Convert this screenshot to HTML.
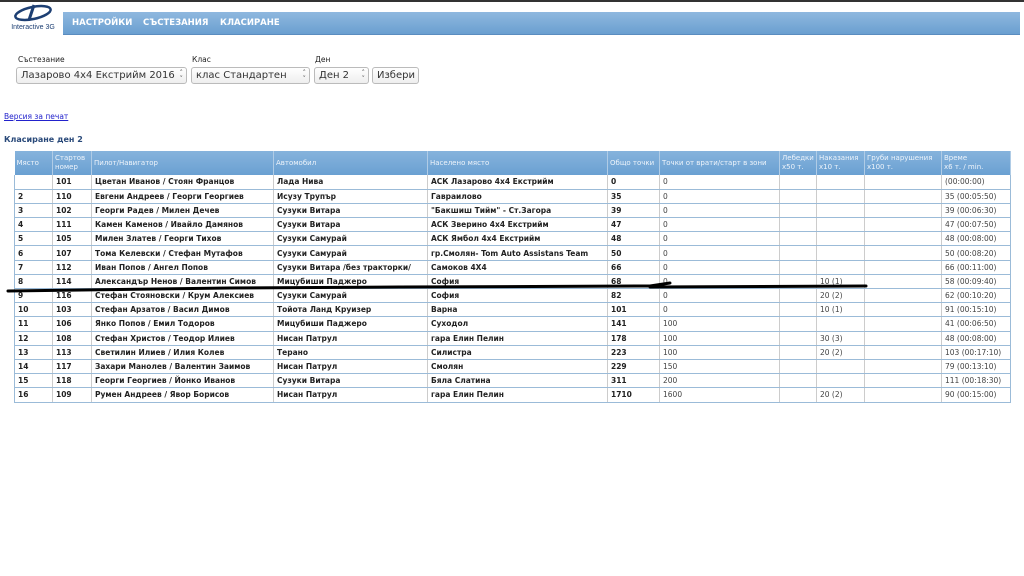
<!DOCTYPE html>
<html><head><meta charset="utf-8"><style>
*{margin:0;padding:0;box-sizing:border-box}
body{width:1024px;height:576px;background:#fff;font-family:"DejaVu Sans","Liberation Sans",sans-serif;position:relative;overflow:hidden;color:#222}
.top{position:absolute;left:0;top:0;width:1024px;height:2px;background:#333}
.nav{position:absolute;left:63px;top:12px;width:957px;height:23px;background:linear-gradient(#8fb8df,#6a9fd0);border-bottom:1px solid #5a8cbf}
.nav span{position:absolute;top:6px;color:#fff;font-weight:bold;font-size:8.5px}
.lbl{position:absolute;top:55px;font-size:7.5px;color:#222}
.sel{position:absolute;top:67px;height:17px;border:1px solid #bbb;border-radius:3px;background:linear-gradient(#fff,#eee);font-size:10px;padding:2px 4px;color:#333;white-space:nowrap}
.sel i{position:absolute;right:3px;top:2px;font-style:normal;font-size:7px;color:#666;line-height:6px}
a{position:absolute;left:4px;top:112px;font-size:7.5px;color:#22c;text-decoration:underline}
h3{position:absolute;left:4px;top:135px;font-size:8px;color:#2a4a7a;font-weight:bold}
table{position:absolute;left:14px;top:151px;width:996px;border-collapse:collapse;table-layout:fixed}
th{background:linear-gradient(#86b3dc,#6aa0d2);color:#eef4fb;font-weight:normal;font-size:7px;text-align:left;padding:1px 2px;height:24px;border-right:1px solid #b0cce6;vertical-align:middle;line-height:9px;white-space:nowrap;overflow:hidden}
td{font-size:7.5px;font-weight:bold;height:14.2px;padding:0 3px;border-right:1px solid #ccc;border-bottom:1px solid #9bbbd8;white-space:nowrap;overflow:hidden;line-height:13px}
td.n{font-weight:normal;color:#444}
td:first-child{border-left:1px solid #9bbbd8}
td:last-child{border-right:1px solid #9bbbd8}
</style></head><body>
<div class="top"></div>
<svg style="position:absolute;left:4px;top:3px" width="58" height="30" viewBox="0 0 58 30">
<ellipse cx="29" cy="10" rx="18" ry="6" fill="none" stroke="#1d3f73" stroke-width="2.5" transform="rotate(-12 29 10)"/>
<path d="M30 2 L25 17" stroke="#1d3f73" stroke-width="3"/>
<text x="29" y="26" font-size="7" text-anchor="middle" fill="#1d3f73" font-family="Liberation Sans">Interactive 3G</text>
</svg>
<div class="nav"><span style="left:9px">НАСТРОЙКИ</span><span style="left:80px">СЪСТЕЗАНИЯ</span><span style="left:157px">КЛАСИРАНЕ</span></div>
<div class="lbl" style="left:18px">Състезание</div>
<div class="lbl" style="left:192px">Клас</div>
<div class="lbl" style="left:315px">Ден</div>
<div class="sel" style="left:16px;width:171px">Лазарово 4x4 Екстрийм 2016<i>˄<br>˅</i></div>
<div class="sel" style="left:191px;width:119px">клас Стандартен<i>˄<br>˅</i></div>
<div class="sel" style="left:314px;width:55px">Ден 2<i>˄<br>˅</i></div>
<div class="sel" style="left:372px;width:47px">Избери</div>
<a>Версия за печат</a>
<h3>Класиране ден 2</h3>
<table>
<colgroup><col style="width:38px"><col style="width:39px"><col style="width:182px"><col style="width:154px"><col style="width:180px"><col style="width:52px"><col style="width:120px"><col style="width:37px"><col style="width:48px"><col style="width:77px"><col style="width:69px"></colgroup>
<tr><th>Място</th><th>Стартов<br>номер</th><th>Пилот/Навигатор</th><th>Автомобил</th><th>Населено място</th><th>Общо точки</th><th>Точки от врати/старт в зони</th><th>Лебедки<br>x50 т.</th><th>Наказания<br>x10 т.</th><th>Груби нарушения<br>x100 т.</th><th>Време<br>x6 т. / min.</th></tr>
<tr><td></td><td>101</td><td>Цветан Иванов / Стоян Францов</td><td>Лада Нива</td><td>АСК Лазарово 4x4 Екстрийм</td><td>0</td><td class="n">0</td><td></td><td></td><td></td><td class="n">(00:00:00)</td></tr>
<tr><td>2</td><td>110</td><td>Евгени Андреев / Георги Георгиев</td><td>Исузу Трупър</td><td>Гавраилово</td><td>35</td><td class="n">0</td><td></td><td></td><td></td><td class="n">35 (00:05:50)</td></tr>
<tr><td>3</td><td>102</td><td>Георги Радев / Милен Дечев</td><td>Сузуки Витара</td><td>"Бакшиш Тийм" - Ст.Загора</td><td>39</td><td class="n">0</td><td></td><td></td><td></td><td class="n">39 (00:06:30)</td></tr>
<tr><td>4</td><td>111</td><td>Камен Каменов / Ивайло Дамянов</td><td>Сузуки Витара</td><td>АСК Зверино 4x4 Екстрийм</td><td>47</td><td class="n">0</td><td></td><td></td><td></td><td class="n">47 (00:07:50)</td></tr>
<tr><td>5</td><td>105</td><td>Милен Златев / Георги Тихов</td><td>Сузуки Самурай</td><td>АСК Ямбол 4x4 Екстрийм</td><td>48</td><td class="n">0</td><td></td><td></td><td></td><td class="n">48 (00:08:00)</td></tr>
<tr><td>6</td><td>107</td><td>Тома Келевски / Стефан Мутафов</td><td>Сузуки Самурай</td><td>гр.Смолян- Tom Auto Assistans Team</td><td>50</td><td class="n">0</td><td></td><td></td><td></td><td class="n">50 (00:08:20)</td></tr>
<tr><td>7</td><td>112</td><td>Иван Попов / Ангел Попов</td><td>Сузуки Витара /без тракторки/</td><td>Самоков 4X4</td><td>66</td><td class="n">0</td><td></td><td></td><td></td><td class="n">66 (00:11:00)</td></tr>
<tr><td>8</td><td>114</td><td>Александър Ненов / Валентин Симов</td><td>Мицубиши Паджеро</td><td>София</td><td>68</td><td class="n">0</td><td></td><td class="n">10 (1)</td><td></td><td class="n">58 (00:09:40)</td></tr>
<tr><td>9</td><td>116</td><td>Стефан Стояновски / Крум Алексиев</td><td>Сузуки Самурай</td><td>София</td><td>82</td><td class="n">0</td><td></td><td class="n">20 (2)</td><td></td><td class="n">62 (00:10:20)</td></tr>
<tr><td>10</td><td>103</td><td>Стефан Арзатов / Васил Димов</td><td>Тойота Ланд Круизер</td><td>Варна</td><td>101</td><td class="n">0</td><td></td><td class="n">10 (1)</td><td></td><td class="n">91 (00:15:10)</td></tr>
<tr><td>11</td><td>106</td><td>Янко Попов / Емил Тодоров</td><td>Мицубиши Паджеро</td><td>Суходол</td><td>141</td><td class="n">100</td><td></td><td></td><td></td><td class="n">41 (00:06:50)</td></tr>
<tr><td>12</td><td>108</td><td>Стефан Христов / Теодор Илиев</td><td>Нисан Патрул</td><td>гара Елин Пелин</td><td>178</td><td class="n">100</td><td></td><td class="n">30 (3)</td><td></td><td class="n">48 (00:08:00)</td></tr>
<tr><td>13</td><td>113</td><td>Светилин Илиев / Илия Колев</td><td>Терано</td><td>Силистра</td><td>223</td><td class="n">100</td><td></td><td class="n">20 (2)</td><td></td><td class="n">103 (00:17:10)</td></tr>
<tr><td>14</td><td>117</td><td>Захари Манолев / Валентин Заимов</td><td>Нисан Патрул</td><td>Смолян</td><td>229</td><td class="n">150</td><td></td><td></td><td></td><td class="n">79 (00:13:10)</td></tr>
<tr><td>15</td><td>118</td><td>Георги Георгиев / Йонко Иванов</td><td>Сузуки Витара</td><td>Бяла Слатина</td><td>311</td><td class="n">200</td><td></td><td></td><td></td><td class="n">111 (00:18:30)</td></tr>
<tr><td>16</td><td>109</td><td>Румен Андреев / Явор Борисов</td><td>Нисан Патрул</td><td>гара Елин Пелин</td><td>1710</td><td class="n">1600</td><td></td><td class="n">20 (2)</td><td></td><td class="n">90 (00:15:00)</td></tr>
</table>
<svg style="position:absolute;left:0;top:0" width="1024" height="576">
<path d="M8 291 L230 288 L400 287 L650 286 L670 283 M650 287 L866 286" stroke="#000" stroke-width="3" fill="none" stroke-linecap="round"/>
</svg>
</body></html>
